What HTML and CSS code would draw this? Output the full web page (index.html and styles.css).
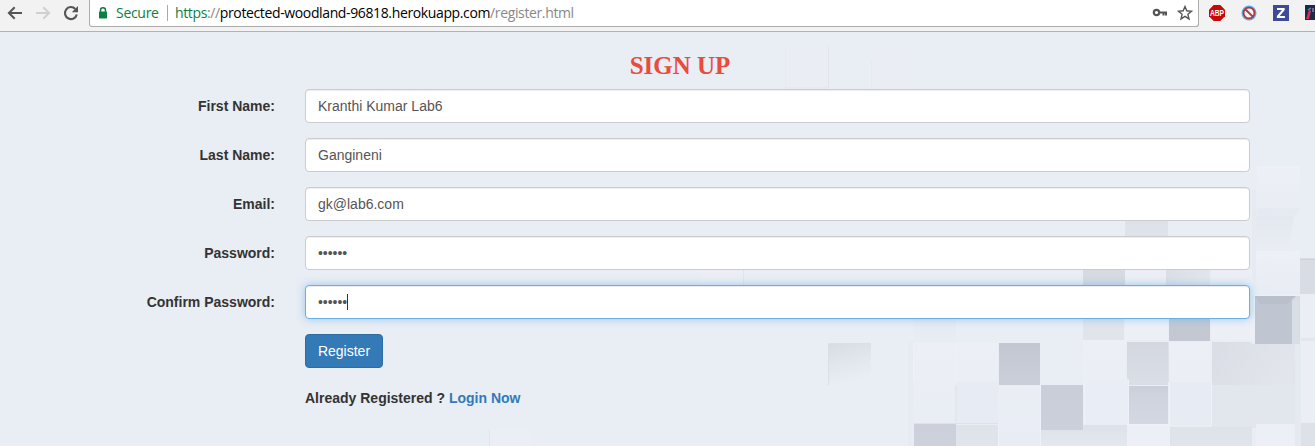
FILE: index.html
```html
<!DOCTYPE html>
<html lang="en">
<head>
<meta charset="utf-8">
<title>Sign up</title>
<link rel="stylesheet" href="styles.css">
</head>
<body>
<header class="toolbar">
  <div class="nav">
    <svg width="88" height="31" viewBox="0 0 88 31" fill="none">
      <path d="M22 13H9M14.700 7.200L8.900 13l5.800 5.800" stroke="#555" stroke-width="2"/>
      <path d="M36 13h13M43.300 7.200L49.100 13l-5.800 5.800" stroke="#d0d0d0" stroke-width="2"/>
      <path d="M75.300 8.900A6 6 0 1 0 76.800 14.500" stroke="#555" stroke-width="2.100"/>
      <path d="M78 6v6.200h-6.200z" fill="#555"/>
    </svg>
  </div>
  <div class="omnibox">
    <svg class="lock" width="10" height="12" viewBox="0 0 10 12"><path d="M2.500 5V3.300a2.500 2.500 0 0 1 5 0V5" fill="none" stroke="#0b8043" stroke-width="1.500"/><rect x="1" y="4.500" width="8" height="7" rx=".7" fill="#0b8043"/></svg>
    <span class="secure">Secure</span>
    <span class="url"><span class="scheme">https</span><span class="dim">://</span>protected-woodland-96818.herokuapp.com<span class="dim">/register.html</span></span>
    <svg class="tools" width="44" height="26" viewBox="0 0 44 26" fill="none">
      <circle cx="5.500" cy="12.500" r="2.700" stroke="#555" stroke-width="2.200"/>
      <path d="M8 12.500h7v3M12.500 12.500v3" stroke="#555" stroke-width="2"/>
      <path d="M34 6.500l1.800 4.300 4.700.4-3.600 3.100 1.100 4.600-4-2.500-4 2.500 1.100-4.600-3.600-3.100 4.700-.4z" stroke="#555" stroke-width="1.400"/>
    </svg>
  </div>
  <svg class="extensions" width="116" height="31" viewBox="0 0 116 31">
    <path d="M6.700 5h6.600l4.700 4.700v6.600L13.300 21H6.700L2 16.300V9.700z" fill="#c80909"/>
    <text class="abp" x="10" y="16" text-anchor="middle" textLength="14" lengthAdjust="spacingAndGlyphs">ABP</text>
    <circle cx="42" cy="13" r="7.500" fill="#5aace8"/>
    <circle cx="42" cy="13" r="5.400" fill="#f6f2f1" stroke="#a83b3c" stroke-width="1.700"/>
    <path d="M38.500 9.500l7.200 7" stroke="#a83b3c" stroke-width="1.800"/>
    <rect x="66" y="5" width="16" height="16" fill="#3e4b99"/>
    <path d="M70 8h7.700v2l-5 6h5.200v2h-8v-2l5-6H70z" fill="#fff"/>
    <path d="M98 5h18v15H98z" fill="#23264f"/>
    <path d="M98 6h6v3h5v4h7v7h-7l-4-7-7 4z" fill="#1c2948"/>
    <path d="M101 10l3-2M106 8v4" stroke="#7287b5" stroke-width="1.500"/>
    <path d="M99 19l3-9 2 1-2 8z" fill="#e02c48"/>
  </svg>
</header>
<main class="page">
  <svg class="backdrop" width="1315" height="414" viewBox="0 32 1315 414" aria-hidden="true">
    <defs>
      <linearGradient id="pit" x2=".3" y2="1"><stop stop-color="#d7dbe3"/><stop offset=".5" stop-color="#e1e5ec"/><stop offset="1" stop-color="#e9edf4"/></linearGradient>
      <linearGradient id="dark" x2="0" y2="1"><stop stop-color="#c2c7d2"/><stop offset=".25" stop-color="#c8cdd8"/><stop offset="1" stop-color="#ced2dd"/></linearGradient>
      <linearGradient id="mid" x2="0" y2="1"><stop stop-color="#d3d7e0"/><stop offset=".3" stop-color="#d9dde5"/><stop offset="1" stop-color="#e2e6ed"/></linearGradient>
      <linearGradient id="soft" x2="1" y2=".3"><stop stop-color="#d9dde5"/><stop offset="1" stop-color="#e2e5ec"/></linearGradient>
      <linearGradient id="lit" x2="0" y2="1"><stop stop-color="#edf0f6"/><stop offset="1" stop-color="#e8ecf4"/></linearGradient>
      <linearGradient id="fade" x2="0" y2="1"><stop stop-color="#dde1e9"/><stop offset="1" stop-color="#e8ecf3"/></linearGradient>
    </defs>
    <path fill="#e9edf4" d="M0 32h1315v414H0z"/>
    <path fill="#ebeef4" d="M786 46h42v42h-42zM872 47h42v42h-42z" opacity=".6"/>
    <path fill="none" stroke="#dfe3eb" d="M828.500 46v42H786" opacity=".8"/>
    <path fill="none" stroke="#e5e9f0" d="M785.500 88V46M871.500 89V60"/>
    <path fill="#ebeef4" d="M701 270h42v16h-42zM490 429h42v17h-42z" opacity=".7"/>
    <path stroke="#e0e4eb" d="M743.500 270v16M489.500 430v16"/>
    <path fill="url(#pit)" d="M829 343h42v42h-42z"/>
    <path fill="none" stroke="#dadee5" d="M828.500 385v-41.500H871"/>
    <path fill="#e4e8ef" d="M908 342h5v104h-5z" opacity=".4"/>
    <path fill="url(#lit)" d="M913 343h43v38h-43zM956 343h42v38h-42zM914 381h42v41h-42zM998 385h42v61h-42zM1083 340h43v39h-43zM1168 342h43v40h-43zM1211 319h44v21h-44zM1125 319h43v21h-43z"/>
    <path fill="#e7ebf3" d="M956 382h42v42h-42z"/>
    <path fill="url(#fade)" d="M914 319h42v23h-42zM1125 221h43v16h-43z"/>
    <path fill="url(#dark)" d="M999 343h41v42h-41zM1041 385h42v45h-42zM914 424h42v40h-42z"/>
    <path fill="url(#mid)" d="M956 425h42v40h-42zM1127 342h41v43h-41zM1170 428h39v30h-39zM1209 428h43v26h-43z"/>
    <path fill="#d6dae2" d="M1083 270h42v16h-42z"/>
    <path fill="url(#soft)" d="M1166 270h44v16h-44z"/>
    <path fill="#ebeef5" d="M1126 270h40v16h-40zM1211 270h42v16h-42z"/>
    <path fill="#e1e4ea" d="M1083 319h41v21h-41z"/>
    <path fill="#c3c8d2" d="M1169 319h41v22h-41z"/>
    <path fill="url(#soft)" d="M1212 342h40v43h-40zM1253 344h42v41h-42z"/>
    <path fill="#e2e6ed" d="M1212 385h83v43h-83z"/>
    <path fill="#e9edf5" d="M1085 379h43v45h-43z"/>
    <path fill="url(#dark)" opacity=".8" d="M1129 386h39v38h-39z"/>
    <path fill="#e7ebf4" d="M1170 382h42v43h-42z"/>
    <path fill="url(#fade)" d="M1041 430h42v30h-42zM1083 425h44v30h-44z"/>
    <path fill="#eceff6" d="M1127 425h43v21h-43zM1256 424h43v22h-43z"/>
    <path fill="none" stroke="#eef1f7" d="M913.500 343v38M956 343v38M1040.500 385v61M1084.500 424v-45M1128.500 424v-44.500M1169.500 425v-42M1211.500 425v-42.500M998.500 425v21M1127 424.500h43"/>
    <path fill="none" stroke="#dde1e9" d="M956 385v37M1168.500 342v40M1083 425.500h44M1252.500 344v41M1170 427.500h82M914 423.500h84"/>
    <path fill="#e3e7ee" d="M1252 190h4v90h-4z" opacity=".4"/>
    <path fill="url(#fade)" opacity=".45" d="M1256 216h38l-5 35h-33z"/>
    <path fill="url(#lit)" d="M1257 166h43v49h-43z"/>
    <path fill="#e2e6ed" d="M1254 215l4-7h42l-6 8h-40z" opacity=".45"/>
    <path fill="url(#lit)" d="M1256 251h44v43h-44z"/>
    <path fill="#d8dce4" d="M1300 258h15v36h-15z"/><path stroke="#cdd2db" d="M1300 259.500h15"/>
    <path fill="#d5dae3" d="M1287 296h13v48h-13z"/>
    <path fill="#c0c6d1" d="M1255 296h37v48h-37z"/>
    <path fill="#b9bfcb" d="M1255 296h41l-9 8h-27z"/>
    <path fill="#d9dde5" d="M1292 344v-42l7-5v47z"/>
    <path fill="#e5e9f0" d="M1295 344h6v102h-6z"/>
    <path fill="#ebeef5" d="M1301 294h14v45h-14zM1301 341h14v82h-14z"/>
    <path fill="#dde1e8" d="M1301 423h14v23h-14z"/>
    <path fill="#e3e6ed" d="M1301 338h14v3h-14z"/>
    <path fill="none" stroke="#edf0f5" d="M1255 295.500h45M1254.500 298v42l-3 4"/>
  </svg>
  <h1 class="title">SIGN UP</h1>
  <form class="form">
    <label class="label">First Name:</label><div class="control">Kranthi Kumar Lab6</div>
    <label class="label">Last Name:</label><div class="control">Gangineni</div>
    <label class="label">Email:</label><div class="control">gk@lab6.com</div>
    <label class="label">Password:</label><div class="control"><span class="dots">••••••</span></div>
    <label class="label">Confirm Password:</label><div class="control focused"><span class="dots">••••••</span><span class="caret"></span></div>
    <button class="submit" type="button">Register</button>
    <p class="already">Already Registered ? <a class="login">Login Now</a></p>
  </form>
</main>
</body>
</html>
```

FILE: styles.css
```css
* { box-sizing: border-box; }
body {
  margin: 0;
  height: 446px;
  overflow: hidden;
  background: #e9edf4;
  color: #333;
  font: 14px/20px "Liberation Sans", Arial, sans-serif;
}
.toolbar {
  display: flex;
  height: 32px;
  background: #f2f2f2;
  border-bottom: 1px solid #b3b3b3;
}
.nav { flex: none; width: 89px; }
.nav svg, .extensions { display: block; }
.omnibox {
  display: flex;
  flex: none;
  align-items: center;
  width: 1110px;
  height: 27px;
  padding: 0 3px 0 8px;
  background: #fff;
  border: 1px solid #ababab;
  border-top: 0;
  border-radius: 0 0 3px 3px;
  font: 14px/26px "Open Sans", "Noto Sans", sans-serif;
  letter-spacing: -0.37px;
}
.lock { margin-right: 8px; }
.secure {
  width: 52px;
  color: #0b8043;
  letter-spacing: -0.3px;
  border-right: 1px solid #aaa;
  line-height: 16px;
}
.url { margin-left: 7px; color: #000; white-space: nowrap; }
.scheme { color: #0b8043; }
.dim { color: #888; }
.tools { margin-left: auto; }
.extensions { margin-left: 8px; flex: none; }
.abp { font: bold 8.500px "Liberation Sans", Arial, sans-serif; fill: #fff; }
.page { position: relative; height: 414px; padding-top: 20px; }
.backdrop { position: absolute; top: 0; left: 0; z-index: -1; }
.title {
  margin: 0 0 9px;
  padding-left: 45px;
  color: #e74c3c;
  font: bold 25px/28px "Liberation Serif", "Times New Roman", serif;
  text-align: center;
}
.form {
  display: grid;
  grid-template-columns: 275px 945px;
  column-gap: 30px;
  row-gap: 15px;
}
.label { padding-top: 7px; font-weight: bold; text-align: right; }
.control {
  display: flex;
  align-items: center;
  height: 34px;
  padding: 0 12px;
  background: #fff;
  border: 1px solid #ccc;
  border-radius: 4px;
  box-shadow: inset 0 1px 1px rgba(0, 0, 0, .075);
  color: #555;
}
.focused {
  border-color: #66afe9;
  box-shadow: inset 0 1px 1px rgba(0, 0, 0, .075), 0 0 8px rgba(102, 175, 233, .6);
}
.dots { letter-spacing: -0.050px; }
.caret { width: 1px; height: 16px; background: #333; }
.submit {
  grid-column: 2;
  justify-self: start;
  width: 78px;
  height: 34px;
  padding: 0;
  background: #337ab7;
  border: 1px solid #2e6da4;
  border-radius: 4px;
  color: #fff;
  font: 14px/20px "Liberation Sans", Arial, sans-serif;
}
.already { grid-column: 2; margin: 5px 0 0; font-weight: bold; }
.login { color: #337ab7; }
```
